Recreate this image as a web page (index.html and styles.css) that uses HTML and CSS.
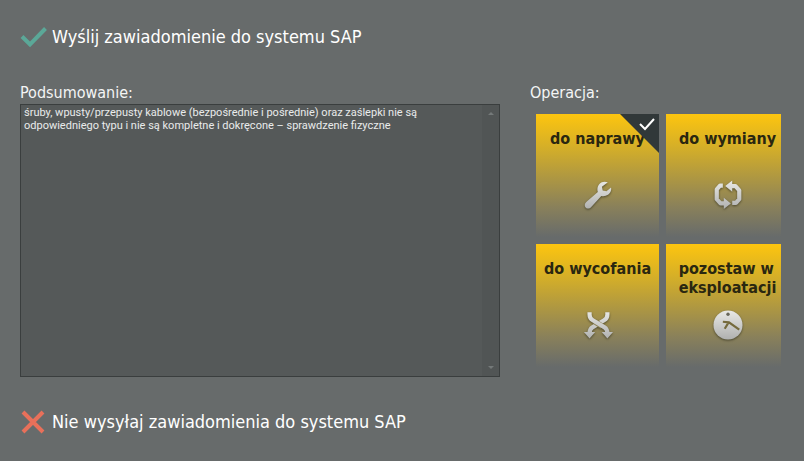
FILE: index.html
```html
<!DOCTYPE html>
<html lang="pl">
<head>
    <meta charset="UTF-8">
    <meta name="viewport" content="width=device-width, initial-scale=1.0">
    <title>Zawiadomienie SAP</title>
    <link rel="stylesheet" href="styles.css">
</head>
<body>
    <form class="notice">
        <button type="button" class="action">
            <svg class="action-icon" viewBox="0 0 28 24" aria-hidden="true">
                <path d="M2 11.500L10 19.500L25.500 3.500" fill="none" stroke="#5ba898" stroke-width="4"/>
            </svg>
            Wyślij zawiadomienie do systemu SAP
        </button>

        <div class="columns">
            <div class="summary">
                <label class="caption" for="summary">Podsumowanie:</label>
                <div class="summary-box">
                    <textarea id="summary" spellcheck="false">śruby, wpusty/przepusty kablowe (bezpośrednie i pośrednie) oraz zaślepki nie są
odpowiedniego typu i nie są kompletne i dokręcone – sprawdzenie fizyczne</textarea>
                    <div class="rail">
                        <button type="button" class="arrow" aria-label="W górę">
                            <svg viewBox="0 0 8 4"><path d="M0 4L4 0L8 4Z"/></svg>
                        </button>
                        <button type="button" class="arrow" aria-label="W dół">
                            <svg viewBox="0 0 8 4"><path d="M0 0L4 4L8 0Z"/></svg>
                        </button>
                    </div>
                </div>
            </div>

            <fieldset class="operations">
                <legend class="caption">Operacja:</legend>
                <div class="tiles">
                    <label class="tile">
                        <input type="radio" name="operation" value="repair" checked>
                        <span class="tile-name">do naprawy</span>
                        <svg class="tile-icon" viewBox="0 0 32 32" aria-hidden="true">
                            <defs>
                                <linearGradient id="metal" gradientUnits="userSpaceOnUse" x1="0" y1="2" x2="0" y2="30">
                                    <stop offset="0" stop-color="#e6e6e3"/>
                                    <stop offset="1" stop-color="#b2b3b2"/>
                                </linearGradient>
                            </defs>
                            <path fill="url(#metal)" d="M26.500 2.500C23 1 18.500 2 16.500 5.500C15 8 15.200 10.500 15.800 12.800L3.500 23.500C1.300 25.600 1.500 28 3 29.500C4.600 31 7 30.800 8.800 28.800L19.500 17C24 18 28.500 15.700 29.800 11.500C30.200 10.200 30.200 9 29.900 8L25 12L21 11.200L20.200 7.200L26.500 2.500Z"/>
                        </svg>
                        <svg class="corner" viewBox="0 0 39 39" aria-hidden="true">
                            <path d="M0 0H39V39Z" fill="#313839"/>
                            <path d="M20 10L25 15L34 5" fill="none" stroke="#fff" stroke-width="2"/>
                        </svg>
                    </label>
                    <label class="tile">
                        <input type="radio" name="operation" value="replace">
                        <span class="tile-name">do wymiany</span>
                        <svg class="tile-icon" viewBox="0 0 32 32" aria-hidden="true">
                            <path d="M10.500 6H7.500L4 10V20.500L8 25H13M20.500 24.500H24.500L28 20.500V11L24 6.500H19" fill="none" stroke="url(#metal)" stroke-width="4.500" stroke-linejoin="round"/>
                            <path fill="url(#metal)" d="M20.500 0.500V12.500L13 6.500ZM11.500 19V31L19 25Z"/>
                        </svg>
                        <svg class="corner" viewBox="0 0 39 39" aria-hidden="true">
                            <path d="M0 0H39V39Z" fill="#313839"/>
                            <path d="M20 10L25 15L34 5" fill="none" stroke="#fff" stroke-width="2"/>
                        </svg>
                    </label>
                    <label class="tile">
                        <input type="radio" name="operation" value="withdraw">
                        <span class="tile-name">do wycofania</span>
                        <svg class="tile-icon" viewBox="0 0 32 32" aria-hidden="true">
                            <path d="M26 2.500V5C26 8 25 9.500 22.500 11L10 18.500C7.500 20 7 21.500 7 25" fill="none" stroke="url(#metal)" stroke-width="4.500"/>
                            <path d="M12.500 12.500L20.500 17.500" fill="none" stroke="#8a8052" stroke-width="6"/>
                            <path d="M7 2.500V5C7 8 8 9.500 10.500 11L23 18.500C25.500 20 26 21.500 26 25" fill="none" stroke="url(#metal)" stroke-width="4.500"/>
                            <path fill="url(#metal)" d="M1 23.500H13L7 30.500ZM20 23.500H32L26 30.500Z"/>
                        </svg>
                        <svg class="corner" viewBox="0 0 39 39" aria-hidden="true">
                            <path d="M0 0H39V39Z" fill="#313839"/>
                            <path d="M20 10L25 15L34 5" fill="none" stroke="#fff" stroke-width="2"/>
                        </svg>
                    </label>
                    <label class="tile">
                        <input type="radio" name="operation" value="keep">
                        <span class="tile-name">pozostaw w<br>eksploatacji</span>
                        <svg class="tile-icon" viewBox="0 0 32 32" aria-hidden="true">
                            <circle cx="16" cy="16" r="15.500" fill="url(#metal)"/>
                            <circle cx="16" cy="4.500" r="1.800" fill="#68665a"/>
                            <path d="M10.500 12.500L17 13.200L28 21M16.500 13.500L12.500 20" fill="none" stroke="#756a3c" stroke-width="2.300"/>
                        </svg>
                        <svg class="corner" viewBox="0 0 39 39" aria-hidden="true">
                            <path d="M0 0H39V39Z" fill="#313839"/>
                            <path d="M20 10L25 15L34 5" fill="none" stroke="#fff" stroke-width="2"/>
                        </svg>
                    </label>
                </div>
            </fieldset>
        </div>

        <button type="button" class="action">
            <svg class="action-icon" viewBox="0 0 28 24" aria-hidden="true">
                <path d="M3 2L23 22M23 2L3 22" fill="none" stroke="#e8705a" stroke-width="4"/>
            </svg>
            Nie wysyłaj zawiadomienia do systemu SAP
        </button>
    </form>
</body>
</html>
```

FILE: styles.css
```css
* {
    box-sizing: border-box;
}

body {
    margin: 0;
    font-family: "DejaVu Sans Condensed", "Noto Sans", sans-serif;
    background: #676b6b;
    color: #f4f5f5;
}

button {
    padding: 0;
    border: 0;
    background: none;
    color: inherit;
    font-family: inherit;
    cursor: pointer;
}

.notice {
    display: flex;
    flex-direction: column;
    align-items: flex-start;
    padding: 25px 22px 0 20px;
}

.action {
    display: flex;
    align-items: center;
    gap: 4px;
    font-size: 18px;
    line-height: 24px;
    color: #fff;
}

.action-icon {
    width: 28px;
    height: 24px;
}

.columns {
    display: flex;
    gap: 30px;
    width: 100%;
    margin: 33px 0;
}

.summary {
    flex: 1;
    min-width: 0;
}

.caption {
    display: block;
    height: 22px;
    padding: 0;
    font-size: 16px;
    line-height: 22px;
}

.summary-box {
    display: flex;
    height: 273px;
    background: #555959;
    border: 1px solid #3a3e3e;
}

.summary-box textarea {
    flex: 1;
    min-width: 0;
    padding: 1px 3px;
    border: 0;
    outline: 0;
    resize: none;
    overflow: hidden;
    background: none;
    color: #e9ebeb;
    font-family: Roboto, sans-serif;
    font-size: 11px;
    line-height: 13px;
}

.rail {
    display: flex;
    flex-direction: column;
    justify-content: space-between;
    width: 17px;
    background: #515555;
}

.arrow {
    display: flex;
    align-items: center;
    justify-content: center;
    height: 17px;
}

.arrow svg {
    width: 6px;
    height: 3px;
    fill: #747979;
}

.operations {
    width: 252px;
    min-width: 0;
    margin: 0;
    padding: 0;
    border: 0;
}

.tiles {
    display: grid;
    grid-template-columns: 123px 123px;
    grid-auto-rows: 123px;
    gap: 7px;
    width: 245px;
    margin: 10px 0 0 6px;
    overflow: hidden;
}

.tile {
    position: relative;
    display: flex;
    flex-direction: column;
    align-items: center;
    justify-content: space-between;
    padding: 15px 8px 27px;
    background: linear-gradient(#fdc50f, #d0ac2b 30%, #8a815a 75%, #676b6b);
    cursor: pointer;
}

.tile input {
    position: absolute;
    opacity: 0;
}

.tile-name {
    font-size: 16px;
    font-weight: bold;
    line-height: 19px;
    white-space: nowrap;
    color: #2a2710;
}

.tile-icon {
    width: 30px;
    height: 30px;
    filter: drop-shadow(0 1px 1px rgba(50, 48, 30, 0.7));
}

.corner {
    position: absolute;
    top: 0;
    right: 0;
    display: none;
    width: 39px;
    height: 39px;
}

.tile input:checked ~ .corner {
    display: block;
}
```
